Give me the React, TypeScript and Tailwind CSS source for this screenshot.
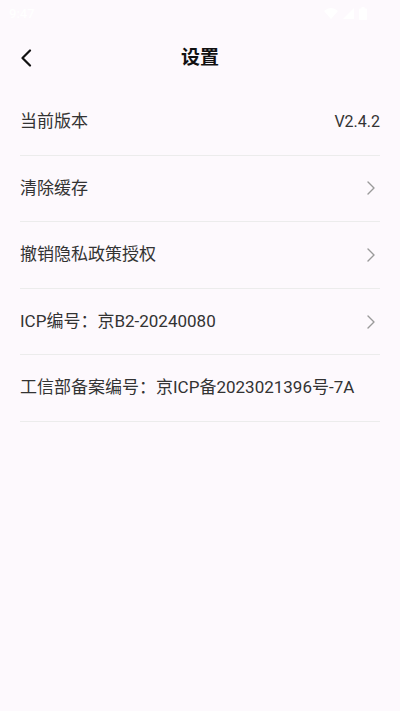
const rows = [
  { label: '当前版本', value: 'V2.4.2', arrow: false },
  { label: '清除缓存', arrow: true },
  { label: '撤销隐私政策授权', arrow: true },
  { label: 'ICP编号：京B2-20240080', arrow: true },
  { label: '工信部备案编号：京ICP备2023021396号-7A', arrow: false },
];

function Chevron() {
  return (
    <svg width="10" height="16" viewBox="0 0 10 16" fill="none" className="shrink-0">
      <path d="M2 2L8 8L2 14" stroke="#9a9a9a" strokeWidth="1.4" strokeLinecap="round" strokeLinejoin="round" />
    </svg>
  );
}

export default function App() {
  return (
    <div
      className="w-[400px] h-[711px] bg-[#fdf9fd] text-[#333333] overflow-hidden"
      style={{ fontFamily: 'Roboto, "Noto Sans CJK SC", sans-serif' }}
    >
      {/* status bar, white on white */}
      <div className="h-[27px] flex items-center justify-between px-[9px] text-white">
        <span className="text-[13px] font-medium">9:47</span>
        <div className="flex items-center gap-[5px] pr-[24px]">
          <svg width="14" height="11" viewBox="0 0 14 11"><path d="M0 3Q7 -3 14 3L7 11Z" fill="#fff" /></svg>
          <svg width="11" height="11" viewBox="0 0 11 11"><path d="M11 0V11H0Z" fill="#fff" /></svg>
          <svg width="8" height="13" viewBox="0 0 8 13"><rect x="0" y="1.5" width="8" height="11.5" rx="1" fill="#fff" /><rect x="2.5" y="0" width="3" height="2" fill="#fff" /></svg>
        </div>
      </div>

      <div className="relative h-[62px] flex items-center justify-center">
        <button className="absolute left-[18px] top-1/2 -translate-y-1/2 p-[2px]">
          <svg width="12" height="18" viewBox="0 0 12 18" fill="none">
            <path d="M10 1.5L2.5 9L10 16.5" stroke="#111" strokeWidth="2.2" strokeLinecap="round" strokeLinejoin="round" />
          </svg>
        </button>
        <h1 className="text-[19px] font-bold text-[#111]">设置</h1>
      </div>

      <ul className="px-[20px]">
        {rows.map((row) => (
          <li
            key={row.label}
            className="h-[66.6px] flex items-center justify-between border-b border-[#ececec] text-[17px]"
          >
            <span>{row.label}</span>
            {row.value && <span className="text-[16px]">{row.value}</span>}
            {row.arrow && (
              <span className="pr-[4px]">
                <Chevron />
              </span>
            )}
          </li>
        ))}
      </ul>
    </div>
  );
}
